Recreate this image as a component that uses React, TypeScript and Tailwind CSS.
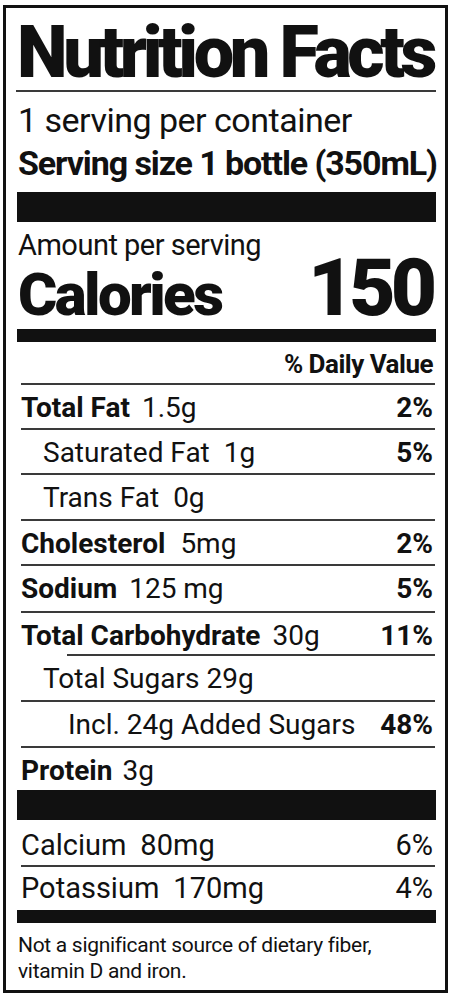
const font = { fontFamily: "Roboto, 'Liberation Sans', sans-serif" };

type Row = {
  label: string;
  amount?: string;
  pct?: string;
  bold?: boolean;
  indent: string;
  h: string;
  gap: string;
  line?: string;
};

const rows: Row[] = [
  { label: "Total Fat", amount: "1.5g", pct: "2%", bold: true, indent: "pl-[4px]", h: "h-[43px]", gap: "ml-[12px]" },
  { label: "Saturated Fat", amount: "1g", pct: "5%", indent: "pl-[26px]", h: "h-[43px]", gap: "ml-[14px]" },
  { label: "Trans Fat", amount: "0g", indent: "pl-[26px]", h: "h-[44px]", gap: "ml-[14px]" },
  { label: "Cholesterol", amount: "5mg", pct: "2%", bold: true, indent: "pl-[4px]", h: "h-[43px]", gap: "ml-[15px]" },
  { label: "Sodium", amount: "125 mg", pct: "5%", bold: true, indent: "pl-[4px]", h: "h-[45px]", gap: "ml-[12px]" },
  { label: "Total Carbohydrate", amount: "30g", pct: "11%", bold: true, indent: "pl-[4px]", h: "h-[41px]", gap: "ml-[12px]" },
  { label: "Total Sugars", amount: "29g", indent: "pl-[26px]", h: "h-[44px]", gap: "ml-[7px]", line: "ml-[50px]" },
  { label: "Incl. 24g Added Sugars", pct: "48%", indent: "pl-[51px]", h: "h-[44px]", gap: "ml-[7px]" },
];

export default function App() {
  return (
    <div className="w-[452px] h-[1000px] bg-white pt-[5px] pl-[3px] text-[#111]" style={font}>
      <div className="w-[445px] h-[988px] border-[3px] border-[#111] pl-[11px] pr-[9px]">
        {/* header */}
        <div className="h-[82px] pt-[9px]">
          <h1 className="text-[72px] leading-none font-black tracking-[-4.4px] whitespace-nowrap">Nutrition Facts</h1>
        </div>
        <div className="h-[2px] bg-[#3a3a3a] -ml-[1px]" />
        <div className="h-[100px] pt-[11px] pl-[1px]">
          <p className="text-[34px] leading-none tracking-[-0.5px] whitespace-nowrap">1 serving per container</p>
          <p className="mt-[9px] text-[34px] leading-none font-bold tracking-[-1.1px] whitespace-nowrap">Serving size 1 bottle (350mL)</p>
        </div>
        <div className="h-[30px] bg-[#111]" />

        {/* calories */}
        <div className="h-[107px] flex justify-between pl-[1px]">
          <div className="pt-[9px]">
            <p className="text-[29px] leading-none tracking-[-0.5px] whitespace-nowrap">Amount per serving</p>
            <p className="mt-[5px] text-[60px] leading-none font-black tracking-[-2.6px]">Calories</p>
          </div>
          <div className="pt-[26px] pr-[4px] text-[80px] leading-none font-black tracking-[-5px]">150</div>
        </div>
        <div className="h-[13px] bg-[#111]" />

        <div className="h-[41px] pt-[9px] pr-[3px] text-right text-[26px] leading-none font-bold tracking-[-0.5px]">
          % Daily Value
        </div>

        {rows.map((r) => (
          <div key={r.label}>
            <div className={`h-[2px] bg-[#3a3a3a] ${r.line ?? "ml-[4px]"} mr-[1px]`} />
            <div className={`${r.h} ${r.indent} pt-[9px] pr-[3px] flex justify-between text-[28px] leading-none whitespace-nowrap`}>
              <span>
                <span className={r.bold ? "font-bold" : ""}>{r.label}</span>
                {r.amount && <span className={r.gap}>{r.amount}</span>}
              </span>
              {r.pct && <span className="font-bold">{r.pct}</span>}
            </div>
          </div>
        ))}

        <div className="h-[2px] bg-[#3a3a3a] ml-[4px] mr-[1px]" />
        <div className="h-[42px] pl-[4px] pt-[9px] text-[28px] leading-none">
          <span className="font-bold">Protein</span>
          <span className="ml-[10px]">3g</span>
        </div>
        <div className="h-[30px] bg-[#111]" />

        <div className="h-[45px] pl-[4px] pr-[3px] pt-[11px] flex justify-between text-[29px] leading-none">
          <span>
            Calcium<span className="ml-[14px]">80mg</span>
          </span>
          <span>6%</span>
        </div>
        <div className="h-[2px] bg-[#3a3a3a] ml-[4px] mr-[1px]" />
        <div className="h-[43px] pl-[4px] pr-[3px] pt-[7px] flex justify-between text-[29px] leading-none">
          <span>
            Potassium<span className="ml-[14px]">170mg</span>
          </span>
          <span>4%</span>
        </div>
        <div className="h-[13px] bg-[#111]" />

        <p className="pt-[9px] pl-[1px] text-[21px] leading-[26px] tracking-[-0.3px]">
          Not a significant source of dietary fiber,
          <br />
          vitamin D and iron.
        </p>
      </div>
    </div>
  );
}
